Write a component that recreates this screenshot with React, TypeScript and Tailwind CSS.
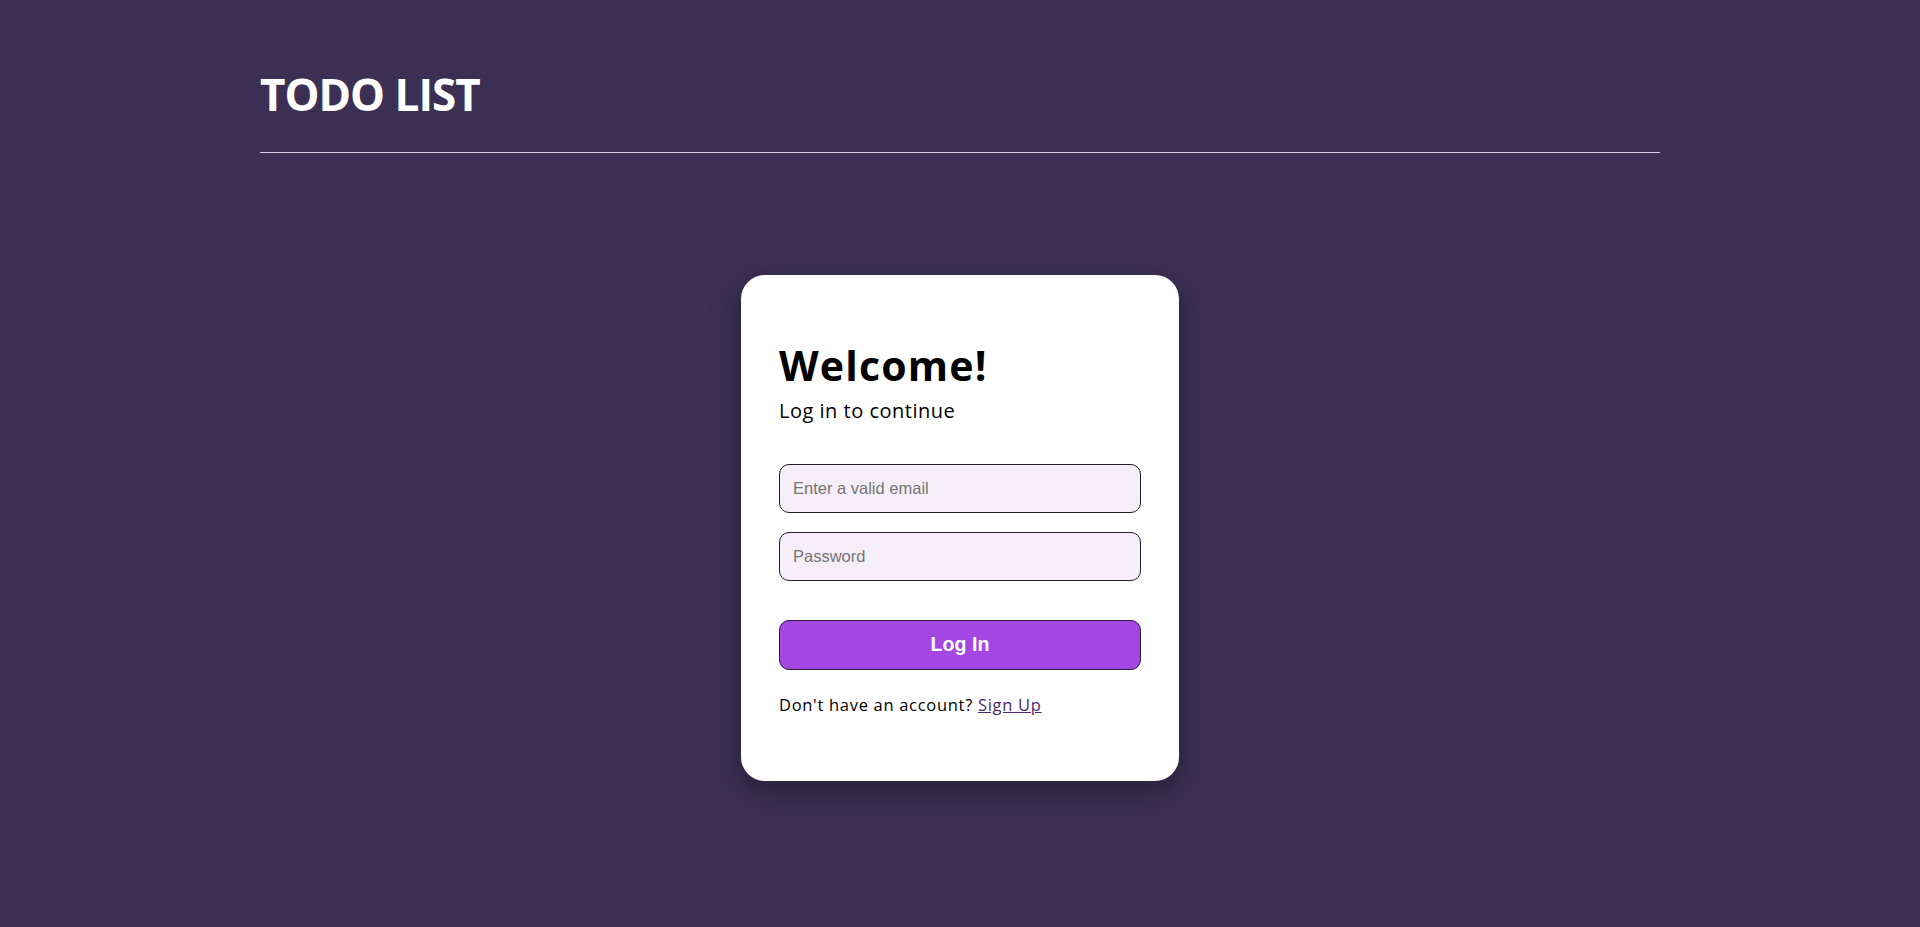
export default function App() {
  return (
    <div className="min-h-screen bg-[#3b3053] font-['Open_Sans',sans-serif]">
      {/* Header */}
      <header className="w-[1400px] mx-auto pt-[62px] pb-[26px] border-b border-[#d9d2e6]">
        <h1 className="text-white font-bold text-[44px] leading-[64px] tracking-[-1px]">TODO LIST</h1>
      </header>

      {/* Login card */}
      <main className="flex justify-center pt-[122px] pb-10">
        <div className="w-[438px] bg-white rounded-[24px] shadow-[0_10px_30px_rgba(0,0,0,0.35)] px-[38px] pt-[65px] pb-[64px]">
          <h2 className="text-black font-bold text-[41px] leading-[50px] tracking-[1.2px]">Welcome!</h2>
          <p className="text-black text-[20px] leading-[28px] mt-[7px] tracking-[0.5px]">Log in to continue</p>

          <form className="mt-[39px] flex flex-col" onSubmit={e => e.preventDefault()}>
            <input
              type="email"
              placeholder="Enter a valid email"
              className="h-[49px] w-full rounded-[10px] border border-[#1f1f1f] bg-[#f5eef9] px-[13px] text-[16.5px] font-['Liberation_Sans',sans-serif] placeholder:text-[#757575] outline-none"
            />
            <input
              type="password"
              placeholder="Password"
              className="mt-[19px] h-[49px] w-full rounded-[10px] border border-[#1f1f1f] bg-[#f5eef9] px-[13px] text-[16.5px] font-['Liberation_Sans',sans-serif] placeholder:text-[#757575] outline-none"
            />
            <button
              type="submit"
              className="mt-[39px] h-[50px] w-full rounded-[10px] border border-[#2b1a3a] bg-[#a346e2] text-white font-bold text-[19.6px] font-['Liberation_Sans',sans-serif]"
            >
              Log In
            </button>
          </form>

          <p className="mt-[23px] text-black text-[16.5px] leading-[24px] tracking-[0.7px]">
            Don't have an account?{' '}
            <a href="#" className="text-[#4a2a6e] underline">Sign Up</a>
          </p>
        </div>
      </main>
    </div>
  )
}
